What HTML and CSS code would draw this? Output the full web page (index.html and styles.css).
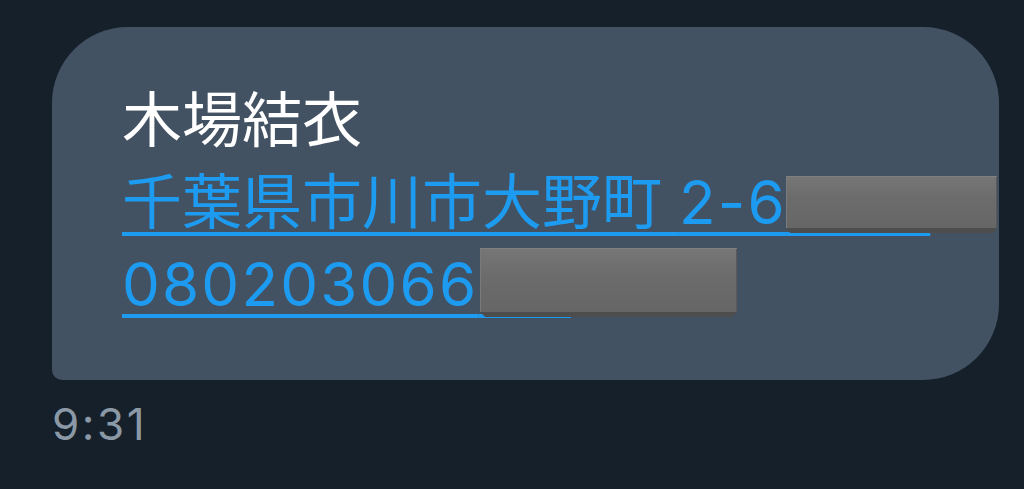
FILE: index.html
```html
<!DOCTYPE html>
<html lang="ja">
<head>
<meta charset="utf-8">
<link rel="stylesheet" href="styles.css">
</head>
<body>
<div class="thread">
  <div class="bubble">
    <div class="line name">木場結衣</div>
    <div class="line"><a class="link">千葉県市川市大野町 <span class="num">2-6</span><span class="hidden h1">0000</span></a></div>
    <div class="line"><a class="link"><span class="num">080203066</span><span class="hidden h2">000</span></a></div>
    <div class="redact r1"></div>
    <div class="redact r2"></div>
  </div>
  <div class="time">9:31</div>
</div>
</body>
</html>
```
FILE: styles.css
```css
html, body {
  margin: 0;
  padding: 0;
  background: #15202b;
  width: 1024px;
  height: 489px;
  overflow: hidden;
}
.thread {
  padding: 27px 0 0 52px;
}
.bubble {
  position: relative;
  box-sizing: border-box;
  width: 947px;
  height: 353px;
  background: #435262;
  border-radius: 76px 76px 76px 10px;
  padding: 52px 0 0 70px;
  font-family: Inter, "Noto Sans CJK JP", sans-serif;
  font-size: 60px;
  line-height: 82px;
  color: #ffffff;
  white-space: nowrap;
}
.line {
  height: 82px;
}
.link {
  color: #1d9bf0;
  text-decoration: underline;
  text-decoration-thickness: 4px;
  text-underline-offset: 8px;
}
.num {
  letter-spacing: 2.2px;
}
.hidden {
  color: transparent;
}
.h1 {
  letter-spacing: -2px;
}
.h2 {
  letter-spacing: -7px;
}
.redact {
  position: absolute;
  background: linear-gradient(180deg, #767676 0%, #6c6c6c 40%, #666666 100%);
  border-top: 1px solid #808080;
  box-shadow: inset 1px 0 0 #7a7a7a, inset -1px 0 0 #5a5a5a;
}
.redact::after {
  content: "";
  position: absolute;
  left: 0;
  right: 0;
  bottom: -5px;
  height: 5px;
  background: #4d4d4d;
  clip-path: polygon(0 0, 100% 0, 98% 100%, 2% 100%);
}
.r1 {
  left: 734px;
  top: 149px;
  width: 211px;
  height: 51px;
}
.r2 {
  left: 428px;
  top: 221px;
  width: 257px;
  height: 63px;
}
.time {
  margin-top: 18px;
  font-family: Inter, "Noto Sans", sans-serif;
  font-size: 44px;
  line-height: 52px;
  letter-spacing: 2.5px;
  color: #8b98a5;
}
```
